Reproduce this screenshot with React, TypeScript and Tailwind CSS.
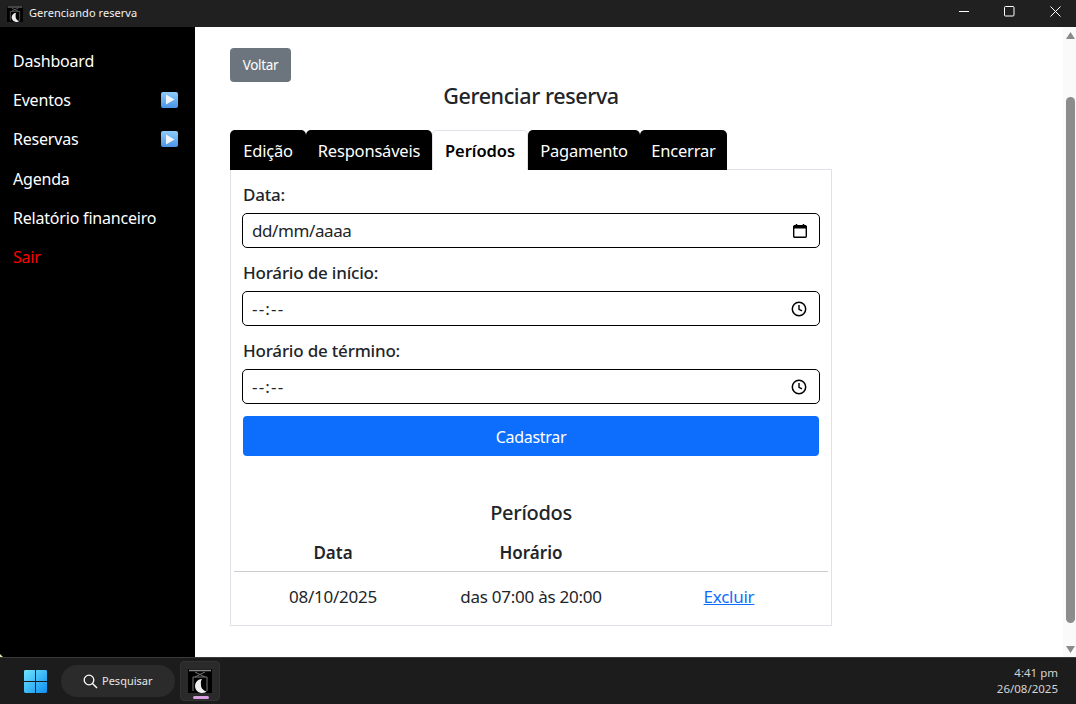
const font = { fontFamily: '"Noto Sans", sans-serif' };

function AppLogo({ className }: { className: string }) {
  return (
    <svg viewBox="0 0 24 24" className={className}>
      <rect width="24" height="24" fill="#000" />
      <path d="M1 1.5h22" stroke="#888" strokeWidth="1.5" />
      <path d="M7 3l10 5M17 3L7 8M5 8h14M5 8v14M19 8v14" stroke="#777" strokeWidth="1" fill="none" />
      <path fillRule="evenodd" d="M14 10a7 7 0 1 0 4.5 12.4a6.5 6.5 0 0 1-5.5-7.4a6 6 0 0 1 1-5z" fill="#eee" />
    </svg>
  );
}

function TitleBar() {
  return (
    <div className="h-[27px] bg-[#202020] flex items-center text-white shrink-0">
      <AppLogo className="ml-[7px] w-4 h-4" />
      <span className="ml-[6px] text-[11px] tracking-[0.05px] text-[#f2f2f2]">Gerenciando reserva</span>
      <div className="ml-auto flex items-center mb-[4px]">
        <svg width="11" height="11" viewBox="0 0 11 11" className="mr-[34px]"><path d="M0 5.5h10" stroke="#fff" /></svg>
        <svg width="11" height="11" viewBox="0 0 11 11" className="mr-[35px]"><rect x="0.5" y="0.5" width="9.5" height="9.5" rx="1" fill="none" stroke="#fff" /></svg>
        <svg width="11" height="11" viewBox="0 0 11 11" className="mr-[15px]"><path d="M0.5 0.5l10 10M10.5 0.5l-10 10" stroke="#fff" /></svg>
      </div>
    </div>
  );
}

function ArrowEmoji() {
  return (
    <span className="w-[17px] h-[16px] rounded-[2px] bg-gradient-to-b from-[#8ecbfa] to-[#4a94e8] flex items-center justify-center">
      <svg width="10" height="11" viewBox="0 0 10 11"><path d="M1 0.5L9.5 5.5L1 10.5z" fill="#f0f5fb" /></svg>
    </span>
  );
}

function SideItem({ label, arrow, red }: { label: string; arrow?: boolean; red?: boolean }) {
  return (
    <div className={`h-[39.3px] flex items-center justify-between pl-[13px] pr-[17px] text-[16px] tracking-[-0.2px] ${red ? "text-[#ff0000]" : "text-white"}`}>
      <span>{label}</span>
      {arrow && <ArrowEmoji />}
    </div>
  );
}

function Sidebar() {
  return (
    <div className="w-[195px] bg-black pt-[14px] shrink-0 relative">
      <SideItem label="Dashboard" />
      <SideItem label="Eventos" arrow />
      <SideItem label="Reservas" arrow />
      <SideItem label="Agenda" />
      <SideItem label="Relatório financeiro" />
      <SideItem label="Sair" red />
      <svg width="3" height="3" viewBox="0 0 3 3" className="absolute left-0 bottom-0"><path d="M0 0l3 3H0z" fill="#e8e0a0" /></svg>
    </div>
  );
}

function Tab({ label, width, active }: { label: string; width: string; active?: boolean }) {
  return (
    <div
      className={`h-10 flex items-center justify-center pt-[2px] rounded-t-[5px] text-[16.5px] ${width} ${
        active ? "bg-white text-black font-semibold tracking-[-0.05px] border border-[#dee2e6] border-b-0" : "bg-black text-white tracking-[-0.2px]"
      }`}
    >
      {label}
    </div>
  );
}

function Field({ label, value, icon }: { label: string; value: string; icon: "date" | "time" }) {
  return (
    <div className="mb-[8px]">
      <div className="text-[17px] font-medium tracking-[-0.2px] text-[#212529] h-[35px] pb-px flex items-center">{label}</div>
      <div className={`h-[35px] -mx-px border border-black rounded-[5px] flex items-center justify-between pl-[9px] text-[17px] text-[#212529] ${icon === "date" ? "pr-[11px] tracking-[-0.4px]" : "pr-[12px] tracking-[1.2px]"}`}>
        <span>{value}</span>
        {icon === "date" ? (
          <svg width="16" height="16" viewBox="0 0 16 16">
            <path d="M4.5 1v2M11.5 1v2" stroke="#000" strokeWidth="1.5" />
            <rect x="1.7" y="2.7" width="12.6" height="11.6" rx="1" fill="none" stroke="#000" strokeWidth="1.4" />
            <path d="M1.5 3h13v2.5h-13z" fill="#000" />
          </svg>
        ) : (
          <svg width="16" height="16" viewBox="0 0 16 16">
            <circle cx="8" cy="8" r="6.7" fill="none" stroke="#000" strokeWidth="1.5" />
            <path d="M8 4v4.3l3 1.6" fill="none" stroke="#000" strokeWidth="1.4" />
          </svg>
        )}
      </div>
    </div>
  );
}

function Panel() {
  return (
    <div className="w-[602px] h-[457px] -mt-px border border-[#dee2e6] px-3 pt-[8px]">
      <Field label="Data:" value="dd/mm/aaaa" icon="date" />
      <Field label="Horário de início:" value="--:--" icon="time" />
      <Field label="Horário de término:" value="--:--" icon="time" />
      <div className="h-10 mt-[12px] pt-px bg-[#0d6efd] rounded-[4px] flex items-center justify-center text-white text-[16px] tracking-[-0.3px]">
        Cadastrar
      </div>
      <div className="mt-[42px] text-center text-[20px] font-medium tracking-[-0.3px] text-[#212529]">Períodos</div>
      <table className="-mx-[9px] w-[594px] mt-[6px] text-[#212529] text-[17px] tracking-[-0.25px] text-center">
        <thead>
          <tr className="border-b border-[#ccc] h-[37px]">
            <th className="w-[198px] font-semibold tracking-normal">Data</th>
            <th className="w-[198px] font-semibold tracking-normal">Horário</th>
            <th className="w-[198px]"></th>
          </tr>
        </thead>
        <tbody>
          <tr className="h-[50px]">
            <td>08/10/2025</td>
            <td>das 07:00 às 20:00</td>
            <td><a href="#" className="text-[#0d6efd] underline">Excluir</a></td>
          </tr>
        </tbody>
      </table>
    </div>
  );
}

function Scrollbar() {
  return (
    <div className="w-[13px] bg-[#fafafa] flex flex-col items-start shrink-0 pt-[5px] pl-[3px]">
      <svg width="9" height="7" viewBox="0 0 9 7" className="block"><path d="M4.5 0L9 7H0z" fill="#8a8a8a" /></svg>
      <div className="w-[9px] h-[526px] mt-[58px] bg-[#8c8c8c] rounded-[5px]"></div>
      <svg width="9" height="7" viewBox="0 0 9 7" className="block mt-[23px]"><path d="M4.5 7L9 0H0z" fill="#8a8a8a" /></svg>
    </div>
  );
}

function Taskbar() {
  return (
    <div className="h-[47px] bg-[#1c1c1c] border-t border-[#3a3a3a] flex items-center shrink-0 text-white relative">
      <svg width="23" height="23" viewBox="0 0 24 24" className="ml-[24px] mt-px">
        <defs>
          <linearGradient id="w" x1="0" y1="0" x2="1" y2="1">
            <stop offset="0" stopColor="#6ee6ff" />
            <stop offset="1" stopColor="#0f8ff0" />
          </linearGradient>
        </defs>
        <path d="M0 1.5A1.5 1.5 0 0 1 1.5 0H11.5V11.5H0zM12.5 0H22.5A1.5 1.5 0 0 1 24 1.5V11.5H12.5zM0 12.5H11.5V24H1.5A1.5 1.5 0 0 1 0 22.5zM12.5 12.5H24V22.5A1.5 1.5 0 0 1 22.5 24H12.5z" fill="url(#w)" />
      </svg>
      <div className="ml-[14px] w-[114px] h-8 rounded-full bg-[#2b2b2b] flex items-center pl-[22px]">
        <svg width="15" height="15" viewBox="0 0 15 15"><circle cx="6" cy="6" r="4.8" fill="none" stroke="#fff" strokeWidth="1.3" /><path d="M9.5 9.5l4.5 4.5" stroke="#fff" strokeWidth="1.4" /></svg>
        <span className="ml-[4px] text-[11px] tracking-[0px] text-[#e6e6e6]">Pesquisar</span>
      </div>
      <div className="ml-[5px] w-10 h-10 rounded-[4px] bg-[#2a2a2a] border border-[#333] flex items-start justify-center pt-[7px] relative">
        <AppLogo className="w-6 h-6" />
        <span className="absolute bottom-[1px] left-[12px] w-4 h-[3px] rounded-full bg-[#d9a0e0]"></span>
      </div>
      <div className="ml-auto mr-[18px] text-right text-[11.5px] leading-[16px] text-[#d4d4d4]">
        <div>4:41 pm</div>
        <div>26/08/2025</div>
      </div>
    </div>
  );
}

export default function App() {
  return (
    <div className="w-[1076px] h-[704px] flex flex-col overflow-hidden" style={font}>
      <TitleBar />
      <div className="flex flex-1 min-h-0">
        <Sidebar />
        <div className="flex-1 bg-white pl-[35px] pt-[21px]">
          <div className="w-[61px] h-[34px] pt-px bg-[#6c757d] rounded-[4px] text-white text-[13.5px] tracking-[-0.3px] flex items-center justify-center">Voltar</div>
          <div className="w-[602px] h-[28px] mb-[20px] flex items-center justify-center text-[21.5px] font-medium tracking-[-0.4px] text-[#212529]">
            Gerenciar reserva
          </div>
          <div className="flex">
            <Tab label="Edição" width="w-[76px]" />
            <Tab label="Responsáveis" width="w-[126px]" />
            <Tab label="Períodos" width="w-[96px]" active />
            <Tab label="Pagamento" width="w-[112px]" />
            <Tab label="Encerrar" width="w-[87px]" />
          </div>
          <Panel />
        </div>
        <Scrollbar />
      </div>
      <Taskbar />
    </div>
  );
}
